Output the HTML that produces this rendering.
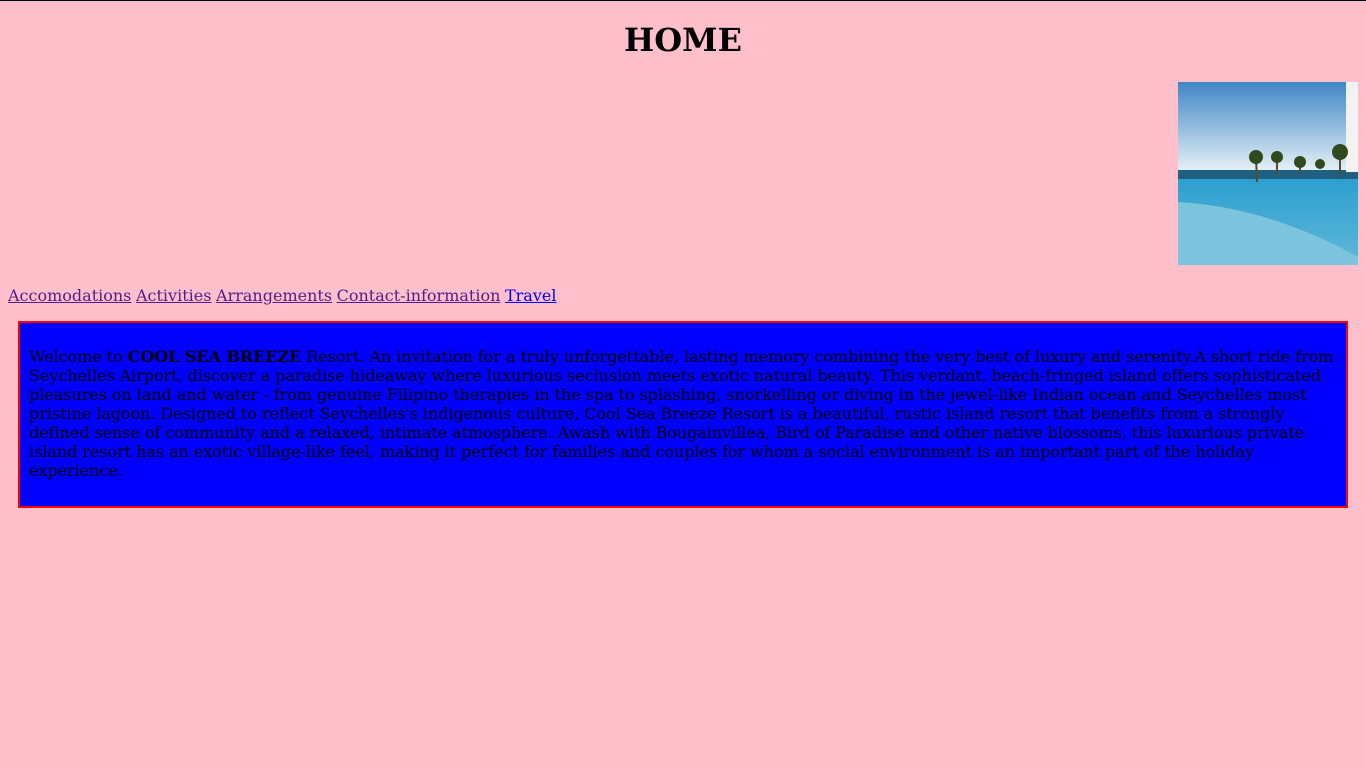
<!DOCTYPE html>
<html><head><style>
html,body{margin:0;padding:0;background:#ffc0cb;}
body{font-family:"DejaVu Serif",serif;font-size:16px;color:#000;width:1366px;height:768px;position:relative;overflow:hidden;border-top:1px solid #000;box-sizing:border-box;}
h1{position:absolute;left:0;top:20px;width:1366px;margin:0;text-align:center;font-size:32px;line-height:38px;font-weight:bold;}
.img{position:absolute;left:1178px;top:81px;width:180px;height:183px;}
.nav{position:absolute;left:8px;top:285px;line-height:20px;white-space:nowrap;word-spacing:-0.5px;}
.nav a{color:#551a8b;text-decoration:underline;}
.nav a.t{color:#0000ee;}
.box{position:absolute;left:18px;top:320px;width:1326px;height:183px;background:#00f;border:2px solid #f00;}
.box p{position:absolute;left:9px;top:24px;width:1310px;margin:0;line-height:19px;letter-spacing:-0.05px;}
</style></head><body>
<h1>HOME</h1>
<svg class="img" viewBox="0 0 180 183">
<defs>
<linearGradient id="sky" x1="0" y1="0" x2="0" y2="1"><stop offset="0" stop-color="#3f86c6"/><stop offset="1" stop-color="#e8f1f6"/></linearGradient>
<linearGradient id="pool" x1="0" y1="0" x2="0" y2="1"><stop offset="0" stop-color="#2d9fd0"/><stop offset="1" stop-color="#5fb8d8"/></linearGradient>
</defs>
<rect width="180" height="90" fill="url(#sky)"/>
<rect y="88" width="180" height="10" fill="#1f5f80"/>
<rect y="97" width="180" height="86" fill="url(#pool)"/>
<path d="M0 120 Q90 125 180 175 L180 183 L0 183Z" fill="#7cc4dd"/>
<rect x="168" y="0" width="12" height="90" fill="#f2f2f2"/>
<g stroke="#5a4a30" stroke-width="2"><line x1="78" y1="75" x2="79" y2="100"/><line x1="99" y1="75" x2="99" y2="92"/><line x1="122" y1="80" x2="122" y2="92"/><line x1="162" y1="70" x2="162" y2="95"/></g>
<g fill="#2e4a1e"><circle cx="78" cy="75" r="7"/><circle cx="99" cy="75" r="6"/><circle cx="122" cy="80" r="6"/><circle cx="142" cy="82" r="5"/><circle cx="162" cy="70" r="8"/></g>
</svg>
<div class="nav"><a>Accomodations</a> <a>Activities</a> <a>Arrangements</a> <a>Contact-information</a> <a class="t">Travel</a></div>
<div class="box"><p>Welcome to <b>COOL SEA BREEZE</b> Resort. An invitation for a truly unforgettable, lasting memory combining the very best of luxury and serenity.A short ride from Seychelles Airport, discover a paradise hideaway where luxurious seclusion meets exotic natural beauty. This verdant, beach-fringed island offers sophisticated pleasures on land and water - from genuine Filipino therapies in the spa to splashing, snorkelling or diving in the jewel-like Indian ocean and Seychelles most pristine lagoon. Designed to reflect Seychelles's indigenous culture, Cool Sea Breeze Resort is a beautiful, rustic island resort that benefits from a strongly defined sense of community and a relaxed, intimate atmosphere. Awash with Bougainvillea, Bird of Paradise and other native blossoms, this luxurious private island resort has an exotic village-like feel, making it perfect for families and couples for whom a social environment is an important part of the holiday experience.</p></div>
</body></html>
